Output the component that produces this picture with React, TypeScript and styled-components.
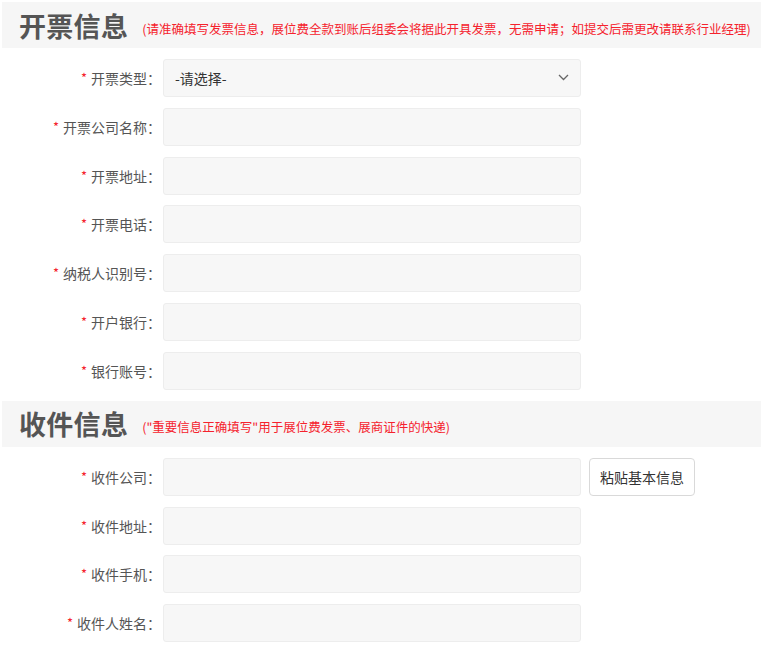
import React from "react";
import styled, { createGlobalStyle } from "styled-components";

const Global = createGlobalStyle`
  html, body { margin: 0; padding: 0; background: #fff; }
  body { font-family: "Noto Sans CJK SC", "Noto Sans", sans-serif; }
  * { box-sizing: border-box; }
`;

const Page = styled.div`
  padding: 2px 0 0 2px;
  width: 761px;
`;

const SectionHead = styled.div<{ $first?: boolean }>`
  display: flex;
  align-items: center;
  height: 46px;
  background: #f6f6f6;
  padding-left: 17px;
  margin-top: ${(p) => (p.$first ? "0" : "11px")};
`;

const Title = styled.h2`
  margin: 0;
  font-size: 27px;
  font-weight: 700;
  color: #555;
  line-height: 1;
  letter-spacing: 0.3px;
`;

const Note = styled.span`
  margin-left: 14px;
  margin-top: 6px;
  font-size: 12.5px;
  color: #f5222d;
  white-space: nowrap;
`;

const Form = styled.div`
  display: flex;
  flex-direction: column;
  gap: 10.8px;
  padding-top: 11px;
`;

const Row = styled.div`
  display: flex;
  align-items: center;
  height: 38px;
`;

const Label = styled.label`
  width: 161px;
  padding-right: 2px;
  text-align: right;
  font-size: 14px;
  color: #555;
  white-space: nowrap;
`;

const Star = styled.span`
  color: #f5222d;
  margin-right: 4px;
  font-size: 13px;
  position: relative;
  top: -1px;
`;

const Field = styled.div`
  position: relative;
  width: 418px;
  height: 38px;
  background: #f7f7f7;
  border: 1px solid #ededed;
  border-radius: 3px;
  display: flex;
  align-items: center;
  padding-left: 11px;
  font-size: 14px;
  color: #333;
`;

const Chevron = styled.svg`
  position: absolute;
  right: 11px;
  top: 50%;
  margin-top: -4px;
`;

const Button = styled.button`
  margin-left: 8px;
  height: 38px;
  padding: 0 10px;
  background: #fff;
  border: 1px solid #d9d9d9;
  border-radius: 4px;
  font-family: inherit;
  font-size: 14px;
  color: #333;
`;

type Item = { label: string; select?: boolean; button?: string };

const invoice: Item[] = [
  { label: "开票类型", select: true },
  { label: "开票公司名称" },
  { label: "开票地址" },
  { label: "开票电话" },
  { label: "纳税人识别号" },
  { label: "开户银行" },
  { label: "银行账号" },
];

const receive: Item[] = [
  { label: "收件公司", button: "粘贴基本信息" },
  { label: "收件地址" },
  { label: "收件手机" },
  { label: "收件人姓名" },
];

function Rows({ items }: { items: Item[] }) {
  return (
    <Form>
      {items.map((it) => (
        <Row key={it.label}>
          <Label>
            <Star>*</Star>
            {it.label}：
          </Label>
          <Field>
            {it.select && (
              <>
                -请选择-
                <Chevron width="11" height="7" viewBox="0 0 11 7">
                  <path d="M1 1l4.5 4.5L10 1" fill="none" stroke="#666" strokeWidth="1.3" />
                </Chevron>
              </>
            )}
          </Field>
          {it.button && <Button>{it.button}</Button>}
        </Row>
      ))}
    </Form>
  );
}

export default function App() {
  return (
    <Page>
      <Global />
      <SectionHead $first>
        <Title>开票信息</Title>
        <Note>(请准确填写发票信息，展位费全款到账后组委会将据此开具发票，无需申请；如提交后需更改请联系行业经理)</Note>
      </SectionHead>
      <Rows items={invoice} />
      <SectionHead>
        <Title>收件信息</Title>
        <Note>("重要信息正确填写"用于展位费发票、展商证件的快递)</Note>
      </SectionHead>
      <Rows items={receive} />
    </Page>
  );
}
